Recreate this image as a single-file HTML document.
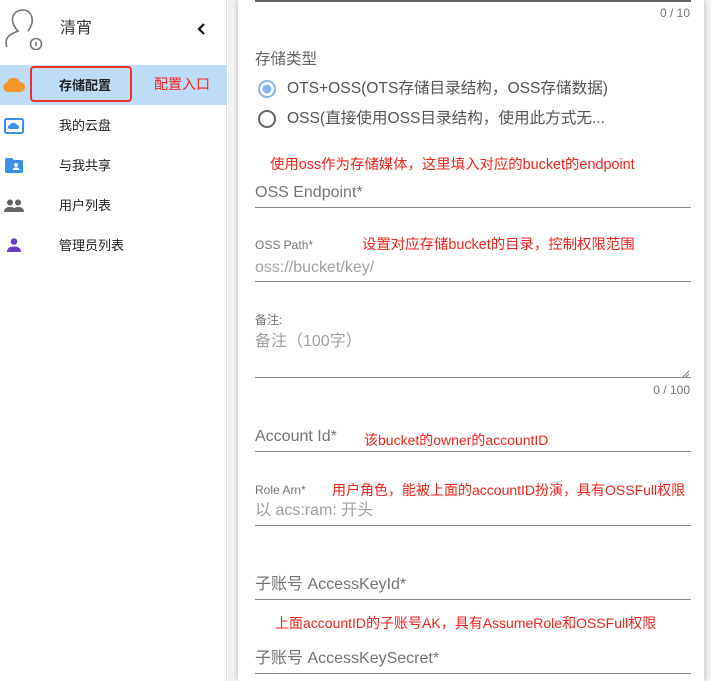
<!DOCTYPE html>
<html><head><meta charset="utf-8"><style>
*{margin:0;padding:0;box-sizing:border-box}
body{width:711px;height:681px;overflow:hidden;background:#fff;font-family:"Liberation Sans","Noto Sans CJK SC",sans-serif;position:relative}
.a{position:absolute;white-space:nowrap;line-height:1}
.ln{position:absolute;left:255px;width:436px;height:1px;background:#8a8a8a}
.red{color:#f2231c;font-size:14.4px}
.lab{color:#757575;font-size:16px}
.sm{color:#757575;font-size:12px}
.ph{color:#a0a0a0;font-size:16px}
</style></head><body>
<div class="a" style="left:0;top:0;width:227px;height:681px;background:#fff;border-right:1px solid #e0e0e0"></div>
<svg class="a" style="left:4px;top:8px" width="40" height="42" viewBox="0 0 40 42"><g fill="none" stroke="#777" stroke-width="1.6"><path d="M19 2c-8 0-12 6-10 13 1 4 3 6 5 8-4 2-10 3-12 10 0 2 0 4 1 6"/><path d="M19 2c7 0 10 6 9 13-1 3-2 6-4 8"/><circle cx="32" cy="36" r="5.5"/><path d="M32 34v4"/></g></svg>
<div class="a" style="left:60px;top:21px;font-size:16px;color:#333">清宵</div>
<svg class="a" style="left:195px;top:22px" width="12" height="14" viewBox="0 0 12 14"><path d="M9 2L4 7l5 5" fill="none" stroke="#111" stroke-width="2.2"/></svg>
<div class="a" style="left:0;top:65px;width:227px;height:40px;background:#bedcf5"></div>
<svg class="a" style="left:3px;top:78px" width="22" height="14" viewBox="0 0 22 14"><path d="M5 14a5 5 0 0 1-1-9.8A7 7 0 0 1 17 4a5 5 0 0 1 0 10z" fill="#f5962a"/></svg>
<div class="a" style="left:30px;top:66px;width:102px;height:36px;border:2px solid #e8322b;border-radius:4px"></div>
<div class="a" style="left:59px;top:79px;font-size:13px;color:#222;font-weight:bold">存储配置</div>
<div class="a red" style="left:154px;top:77px;font-size:14px">配置入口</div>
<svg class="a" style="left:4px;top:118px" width="20" height="16" viewBox="0 0 20 16"><rect x="1" y="1" width="18" height="14" rx="1.5" fill="#fff" stroke="#3d8fe8" stroke-width="2"/><path d="M6 11a2 2 0 0 1 0-4 4 4 0 0 1 7 0 2 2 0 0 1 0 4z" fill="#3d8fe8"/></svg>
<div class="a" style="left:59px;top:119px;font-size:13px;color:#222">我的云盘</div>
<svg class="a" style="left:5px;top:158px" width="18" height="15" viewBox="0 0 18 15"><path d="M0 2a2 2 0 0 1 2-2h5l2 2h7a2 2 0 0 1 2 2v9a2 2 0 0 1-2 2H2a2 2 0 0 1-2-2z" fill="#3d8fe8"/><circle cx="11" cy="7" r="2" fill="#fff"/><path d="M7.5 12a3.5 2.5 0 0 1 7 0z" fill="#fff"/></svg>
<div class="a" style="left:59px;top:159px;font-size:13px;color:#222">与我共享</div>
<svg class="a" style="left:4px;top:199px" width="20" height="13" viewBox="0 0 20 13"><circle cx="6" cy="3.5" r="3" fill="#666"/><circle cx="14" cy="3.5" r="3" fill="#666"/><path d="M0 13c0-4 3-5 6-5s6 1 6 5z M9 13c0-4 3-5 5-5 3 0 6 1 6 5z" fill="#666"/></svg>
<div class="a" style="left:59px;top:199px;font-size:13px;color:#222">用户列表</div>
<svg class="a" style="left:7px;top:238px" width="14" height="14" viewBox="0 0 14 14"><circle cx="7" cy="3.5" r="3.3" fill="#6a3fc0"/><path d="M0 14c0-4 3-5.5 7-5.5s7 1.5 7 5.5z" fill="#6a3fc0"/></svg>
<div class="a" style="left:59px;top:239px;font-size:13px;color:#222">管理员列表</div>
<div class="a" style="left:228px;top:0;width:483px;height:681px;background:#f2f2f2"></div>
<div class="a" style="left:238px;top:0;width:466px;height:681px;background:#fff;box-shadow:0 0 6px rgba(0,0,0,.25)"></div>
<div class="ln" style="top:0;height:2px;background:#666"></div>
<div class="a sm" style="right:21px;top:7px">0 / 10</div>
<div class="a" style="left:255px;top:52px;font-size:15.5px;color:#666">存储类型</div>
<svg class="a" style="left:257px;top:79px" width="20" height="20"><circle cx="10" cy="10" r="8" fill="none" stroke="#8ab4f5" stroke-width="2"/><circle cx="10" cy="10" r="4.5" fill="#8ab4f5"/></svg>
<div class="a" style="left:287px;top:81px;font-size:15.6px;color:#555">OTS+OSS(OTS存储目录结构，OSS存储数据)</div>
<svg class="a" style="left:257px;top:109px" width="20" height="20"><circle cx="10" cy="10" r="8" fill="none" stroke="#666" stroke-width="2"/></svg>
<div class="a" style="left:287px;top:111px;font-size:15.6px;color:#555">OSS(直接使用OSS目录结构，使用此方式无...</div>
<div class="a red" style="left:270px;top:158px">使用oss作为存储媒体，这里填入对应的bucket的endpoint</div>
<div class="a lab" style="left:255px;top:185px">OSS Endpoint*</div>
<div class="ln" style="top:207px"></div>
<div class="a sm" style="left:255px;top:239px">OSS Path*</div>
<div class="a red" style="left:362px;top:238px">设置对应存储bucket的目录，控制权限范围</div>
<div class="a ph" style="left:255px;top:260px">oss://bucket/key/</div>
<div class="ln" style="top:281px"></div>
<div class="a sm" style="left:255px;top:314px">备注:</div>
<div class="a ph" style="left:255px;top:334px">备注（100字）</div>
<svg class="a" style="left:682px;top:370px" width="8" height="8"><path d="M1 7L7 1M4 7L7 4" stroke="#777"/></svg>
<div class="ln" style="top:377px"></div>
<div class="a sm" style="right:21px;top:384px">0 / 100</div>
<div class="a lab" style="left:255px;top:429px">Account Id*</div>
<div class="a red" style="left:364px;top:433px;font-size:14px">该bucket的owner的accountID</div>
<div class="ln" style="top:451px"></div>
<div class="a sm" style="left:255px;top:484px">Role Arn*</div>
<div class="a red" style="left:332px;top:483px;font-size:14px">用户角色，能被上面的accountID扮演，具有OSSFull权限</div>
<div class="a ph" style="left:255px;top:503px">以 acs:ram: 开头</div>
<div class="ln" style="top:525px"></div>
<div class="a lab" style="left:255px;top:577px">子账号 AccessKeyId*</div>
<div class="ln" style="top:599px"></div>
<div class="a red" style="left:275px;top:616px;font-size:14px">上面accountID的子账号AK，具有AssumeRole和OSSFull权限</div>
<div class="a lab" style="left:255px;top:651px">子账号 AccessKeySecret*</div>
<div class="ln" style="top:673px"></div>
</body></html>
